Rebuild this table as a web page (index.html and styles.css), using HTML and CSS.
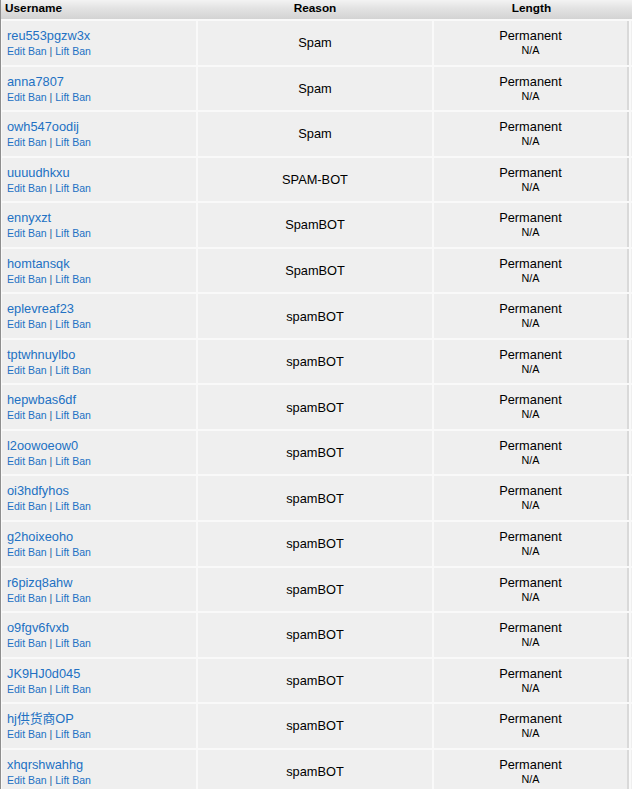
FILE: index.html
```html
<!DOCTYPE html>
<html>
<head>
<meta charset="utf-8">
<link rel="stylesheet" href="styles.css">
</head>
<body>
<div class="panel">
  <div class="head">
    <div class="h h-user">Username</div>
    <div class="h">Reason</div>
    <div class="h">Length</div>
    <div class="h"></div>
  </div>
  <div class="rows">
    <div class="c user"><a class="name">reu553pgzw3x</a><span class="acts"><a>Edit Ban</a> | <a>Lift Ban</a></span></div><div class="c reason">Spam</div><div class="c len"><span class="perm">Permanent</span><span class="na">N/A</span></div><div class="c extra"></div>
    <div class="c user"><a class="name">anna7807</a><span class="acts"><a>Edit Ban</a> | <a>Lift Ban</a></span></div><div class="c reason">Spam</div><div class="c len"><span class="perm">Permanent</span><span class="na">N/A</span></div><div class="c extra"></div>
    <div class="c user"><a class="name">owh547oodij</a><span class="acts"><a>Edit Ban</a> | <a>Lift Ban</a></span></div><div class="c reason">Spam</div><div class="c len"><span class="perm">Permanent</span><span class="na">N/A</span></div><div class="c extra"></div>
    <div class="c user"><a class="name">uuuudhkxu</a><span class="acts"><a>Edit Ban</a> | <a>Lift Ban</a></span></div><div class="c reason">SPAM-BOT</div><div class="c len"><span class="perm">Permanent</span><span class="na">N/A</span></div><div class="c extra"></div>
    <div class="c user"><a class="name">ennyxzt</a><span class="acts"><a>Edit Ban</a> | <a>Lift Ban</a></span></div><div class="c reason">SpamBOT</div><div class="c len"><span class="perm">Permanent</span><span class="na">N/A</span></div><div class="c extra"></div>
    <div class="c user"><a class="name">homtansqk</a><span class="acts"><a>Edit Ban</a> | <a>Lift Ban</a></span></div><div class="c reason">SpamBOT</div><div class="c len"><span class="perm">Permanent</span><span class="na">N/A</span></div><div class="c extra"></div>
    <div class="c user"><a class="name">eplevreaf23</a><span class="acts"><a>Edit Ban</a> | <a>Lift Ban</a></span></div><div class="c reason">spamBOT</div><div class="c len"><span class="perm">Permanent</span><span class="na">N/A</span></div><div class="c extra"></div>
    <div class="c user"><a class="name">tptwhnuylbo</a><span class="acts"><a>Edit Ban</a> | <a>Lift Ban</a></span></div><div class="c reason">spamBOT</div><div class="c len"><span class="perm">Permanent</span><span class="na">N/A</span></div><div class="c extra"></div>
    <div class="c user"><a class="name">hepwbas6df</a><span class="acts"><a>Edit Ban</a> | <a>Lift Ban</a></span></div><div class="c reason">spamBOT</div><div class="c len"><span class="perm">Permanent</span><span class="na">N/A</span></div><div class="c extra"></div>
    <div class="c user"><a class="name">l2oowoeow0</a><span class="acts"><a>Edit Ban</a> | <a>Lift Ban</a></span></div><div class="c reason">spamBOT</div><div class="c len"><span class="perm">Permanent</span><span class="na">N/A</span></div><div class="c extra"></div>
    <div class="c user"><a class="name">oi3hdfyhos</a><span class="acts"><a>Edit Ban</a> | <a>Lift Ban</a></span></div><div class="c reason">spamBOT</div><div class="c len"><span class="perm">Permanent</span><span class="na">N/A</span></div><div class="c extra"></div>
    <div class="c user"><a class="name">g2hoixeoho</a><span class="acts"><a>Edit Ban</a> | <a>Lift Ban</a></span></div><div class="c reason">spamBOT</div><div class="c len"><span class="perm">Permanent</span><span class="na">N/A</span></div><div class="c extra"></div>
    <div class="c user"><a class="name">r6pizq8ahw</a><span class="acts"><a>Edit Ban</a> | <a>Lift Ban</a></span></div><div class="c reason">spamBOT</div><div class="c len"><span class="perm">Permanent</span><span class="na">N/A</span></div><div class="c extra"></div>
    <div class="c user"><a class="name">o9fgv6fvxb</a><span class="acts"><a>Edit Ban</a> | <a>Lift Ban</a></span></div><div class="c reason">spamBOT</div><div class="c len"><span class="perm">Permanent</span><span class="na">N/A</span></div><div class="c extra"></div>
    <div class="c user"><a class="name">JK9HJ0d045</a><span class="acts"><a>Edit Ban</a> | <a>Lift Ban</a></span></div><div class="c reason">spamBOT</div><div class="c len"><span class="perm">Permanent</span><span class="na">N/A</span></div><div class="c extra"></div>
    <div class="c user"><a class="name">hj供货商OP</a><span class="acts"><a>Edit Ban</a> | <a>Lift Ban</a></span></div><div class="c reason">spamBOT</div><div class="c len"><span class="perm">Permanent</span><span class="na">N/A</span></div><div class="c extra"></div>
    <div class="c user"><a class="name">xhqrshwahhg</a><span class="acts"><a>Edit Ban</a> | <a>Lift Ban</a></span></div><div class="c reason">spamBOT</div><div class="c len"><span class="perm">Permanent</span><span class="na">N/A</span></div><div class="c extra"></div>
  </div>
</div>
</body>
</html>
```
FILE: styles.css
```css
html, body {
  margin: 0;
  padding: 0;
  background: #f9f9f9;
  overflow: hidden;
}
body {
  font-family: "Liberation Sans", Arial, "Noto Sans CJK SC", sans-serif;
  color: #000;
}
.panel {
  width: 720px;
  border-left: 1px solid #8e8e8e;
  background: #f9f9f9;
  height: 789px;
}
.head {
  display: grid;
  grid-template-columns: 196px 236px 197px 90px;
  height: 19px;
  background: linear-gradient(to bottom, #f3f3f3 0%, #e2e2e2 45%, #d3d3d3 100%);
  font-size: 11.8px;
  font-weight: bold;
  line-height: 17px;
}
.h {
  text-align: center;
}
.h-user {
  text-align: left;
  padding-left: 4px;
}
.rows {
  display: grid;
  grid-template-columns: 194px 234px 195px 90px;
  grid-auto-rows: 43.56px;
  gap: 2px;
  padding: 2px 0 0 1px;
}
.c {
  background: #efefef;
  box-sizing: border-box;
}
.user {
  display: flex;
  flex-direction: column;
  padding: 7px 0 0 5px;
  color: #2a5f95;
}
.user .name {
  font-size: 12.8px;
  line-height: 16px;
  color: #2271c3;
}
.acts {
  font-size: 10.5px;
  line-height: 14px;
  color: #2a5f95;
}
.acts a {
  color: #2271c3;
}
.reason {
  display: flex;
  align-items: center;
  justify-content: center;
  font-size: 12.8px;
}
.len {
  display: flex;
  flex-direction: column;
  align-items: center;
  padding-top: 7px;
  border-right: 2px solid #d9d9d9;
}
.perm {
  font-size: 12.8px;
  line-height: 16px;
}
.na {
  font-size: 10.8px;
  line-height: 13px;
}
```
